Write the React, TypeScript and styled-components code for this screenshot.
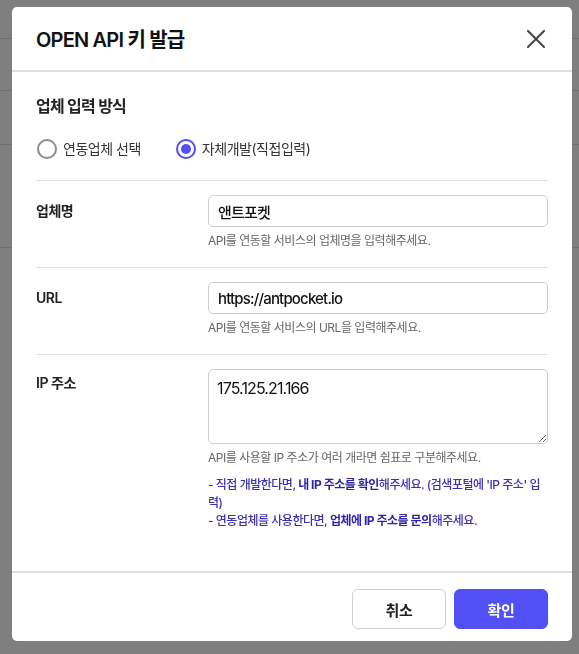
import React, { useState } from "react";
import styled, { createGlobalStyle } from "styled-components";

const GlobalStyle = createGlobalStyle`
  html, body { margin: 0; padding: 0; }
  body {
    font-family: Inter, "Noto Sans CJK KR", sans-serif;
    background: #ffffff;
    color: #222;
    -webkit-font-smoothing: antialiased;
  }
  * { box-sizing: border-box; }
`;

const Page = styled.div`
  height: 654px;
  overflow: hidden;
  display: flex;
  flex-direction: column;
`;

const PageRow = styled.div<{ $h: number }>`
  height: ${(p) => p.$h}px;
  flex-shrink: 0;
  border-bottom: 1px solid #dcdcdc;
`;

const Overlay = styled.div`
  position: fixed;
  inset: 0;
  background: rgba(0, 0, 0, 0.5);
`;

const Dialog = styled.div`
  position: fixed;
  top: 7px;
  left: 12px;
  width: 560px;
  background: #fff;
  border-radius: 5px;
  display: flex;
  flex-direction: column;
  letter-spacing: -0.03em;
`;

const Header = styled.header`
  height: 65px;
  padding: 0 24px;
  display: flex;
  align-items: center;
  justify-content: space-between;
  border-bottom: 2px solid #dedede;
`;

const Title = styled.h1`
  margin: 0;
  font-size: 20px;
  font-weight: 600;
  color: #111;
  letter-spacing: -0.04em;
`;

const CloseButton = styled.button`
  width: 24px;
  height: 24px;
  padding: 0;
  border: 0;
  background: none;
  display: flex;
  align-items: center;
  justify-content: center;
  cursor: pointer;
`;

const Body = styled.div`
  padding: 0 24px;
`;

const MethodSection = styled.section`
  padding: 22px 0 21px;
  border-bottom: 1px solid #e2e2e2;
`;

const SectionTitle = styled.h2`
  margin: 0;
  font-size: 16px;
  line-height: 24px;
  font-weight: 600;
  color: #222;
  letter-spacing: -0.05em;
`;

const RadioGroup = styled.div`
  margin-top: 21px;
  display: flex;
  align-items: center;
  gap: 35px;
  padding-left: 1px;
`;

const RadioLabel = styled.label`
  display: flex;
  align-items: center;
  gap: 6px;
  font-size: 14px;
  line-height: 20px;
  color: #333;
  cursor: pointer;
`;

const HiddenInput = styled.input`
  display: none;
`;

const RadioCircle = styled.span<{ $checked: boolean }>`
  width: 20px;
  height: 20px;
  border-radius: 50%;
  border: 2px solid ${(p) => (p.$checked ? "#5050f5" : "#8c8c8c")};
  display: flex;
  align-items: center;
  justify-content: center;
  &::after {
    content: "";
    width: 10px;
    height: 10px;
    border-radius: 50%;
    background: ${(p) => (p.$checked ? "#5050f5" : "transparent")};
  }
`;

const FieldRow = styled.div<{ $last?: boolean; $pb?: number }>`
  display: grid;
  grid-template-columns: 172px 1fr;
  padding: 14px 0 ${(p) => p.$pb ?? 17}px;
  border-bottom: ${(p) => (p.$last ? "none" : "1px solid #e2e2e2")};
`;

const FieldLabel = styled.div<{ $lh?: number }>`
  font-size: 14px;
  font-weight: 600;
  color: #222;
  line-height: ${(p) => p.$lh ?? 32}px;
`;

const FieldControl = styled.div`
  display: flex;
  flex-direction: column;
`;

const TextInput = styled.input`
  height: 32px;
  width: 100%;
  border: 1px solid #cdcdcd;
  border-radius: 5px;
  padding: 0 9px;
  font-family: inherit;
  font-size: 15px;
  font-weight: 500;
  color: #111;
  letter-spacing: -0.055em;
  outline: none;
`;

const TextArea = styled.textarea`
  height: 75px;
  width: 100%;
  border: 1px solid #cdcdcd;
  border-radius: 5px;
  padding: 6px 8px;
  font-family: inherit;
  font-size: 16px;
  line-height: 24px;
  color: #111;
  letter-spacing: -0.055em;
  outline: none;
  resize: vertical;
  display: block;
`;

const Hint = styled.p`
  margin: 5px 0 0;
  font-size: 12px;
  line-height: 18px;
  color: #666;
`;

const Notes = styled.div`
  margin-top: 9px;
  font-size: 12px;
  line-height: 18px;
  color: #3b30b6;
  font-weight: 500;
`;

const Strong = styled.strong`
  font-weight: 700;
  color: #2e23a6;
`;

const Footer = styled.footer`
  border-top: 2px solid #dedede;
  padding: 16px 24px 12px;
  display: flex;
  justify-content: flex-end;
  gap: 8px;
`;

const Button = styled.button<{ $primary?: boolean }>`
  width: 94px;
  height: 40px;
  border-radius: 6px;
  font-family: inherit;
  font-size: 15px;
  font-weight: 700;
  letter-spacing: -0.02em;
  cursor: pointer;
  border: 1px solid ${(p) => (p.$primary ? "#5050f5" : "#cfcfcf")};
  background: ${(p) => (p.$primary ? "#5050f5" : "#fff")};
  color: ${(p) => (p.$primary ? "#fff" : "#222")};
`;

const CloseIcon = () => (
  <svg width="18" height="18" viewBox="0 0 18 18" fill="none">
    <path d="M1 1L17 17M17 1L1 17" stroke="#444" strokeWidth="2" strokeLinecap="square" />
  </svg>
);

export default function App() {
  const [method, setMethod] = useState<"partner" | "self">("self");
  return (
    <>
      <GlobalStyle />
      <Page>
        <PageRow $h={39} />
        <PageRow $h={52} />
        <PageRow $h={54} />
        <PageRow $h={103} />
      </Page>
      <Overlay />
      <Dialog role="dialog" aria-modal="true">
        <Header>
          <Title>OPEN API 키 발급</Title>
          <CloseButton aria-label="닫기">
            <CloseIcon />
          </CloseButton>
        </Header>
        <Body>
          <MethodSection>
            <SectionTitle>업체 입력 방식</SectionTitle>
            <RadioGroup>
              <RadioLabel>
                <HiddenInput
                  type="radio"
                  name="method"
                  checked={method === "partner"}
                  onChange={() => setMethod("partner")}
                />
                <RadioCircle $checked={method === "partner"} />
                연동업체 선택
              </RadioLabel>
              <RadioLabel>
                <HiddenInput
                  type="radio"
                  name="method"
                  checked={method === "self"}
                  onChange={() => setMethod("self")}
                />
                <RadioCircle $checked={method === "self"} />
                자체개발(직접입력)
              </RadioLabel>
            </RadioGroup>
          </MethodSection>

          <FieldRow>
            <FieldLabel>업체명</FieldLabel>
            <FieldControl>
              <TextInput defaultValue="앤트포켓" />
              <Hint>API를 연동할 서비스의 업체명을 입력해주세요.</Hint>
            </FieldControl>
          </FieldRow>

          <FieldRow>
            <FieldLabel>URL</FieldLabel>
            <FieldControl>
              <TextInput defaultValue="https://antpocket.io" />
              <Hint>API를 연동할 서비스의 URL을 입력해주세요.</Hint>
            </FieldControl>
          </FieldRow>

          <FieldRow $last $pb={41}>
            <FieldLabel $lh={27}>IP 주소</FieldLabel>
            <FieldControl>
              <TextArea defaultValue="175.125.21.166" />
              <Hint>API를 사용할 IP 주소가 여러 개라면 쉼표로 구분해주세요.</Hint>
              <Notes>
                - 직접 개발한다면, <Strong>내 IP 주소를 확인</Strong>해주세요. (검색포털에 'IP 주소' 입
                <br />
                력)
                <br />- 연동업체를 사용한다면, <Strong>업체에 IP 주소를 문의</Strong>해주세요.
              </Notes>
            </FieldControl>
          </FieldRow>
        </Body>
        <Footer>
          <Button>취소</Button>
          <Button $primary>확인</Button>
        </Footer>
      </Dialog>
    </>
  );
}
